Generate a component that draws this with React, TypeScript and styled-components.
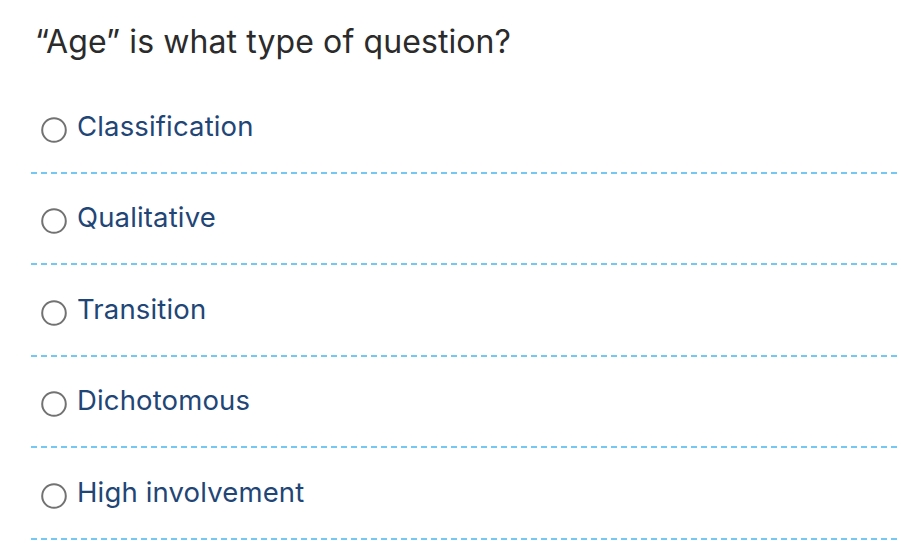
import React, { useState } from "react";
import styled, { createGlobalStyle } from "styled-components";

const GlobalStyle = createGlobalStyle`
  body {
    margin: 0;
    background: #ffffff;
    font-family: Inter, "Liberation Sans", sans-serif;
  }
`;

const Page = styled.div`
  width: 902px;
  height: 552px;
  padding: 23px 4px 0 31px;
  box-sizing: border-box;
  overflow: hidden;
`;

const Question = styled.h2`
  margin: 0 0 21px 4px;
  font-size: 32px;
  line-height: 38px;
  font-weight: 400;
  color: #2b2b2b;
  letter-spacing: 0.1px;
`;

const Options = styled.ul`
  list-style: none;
  margin: 0;
  padding: 0;
`;

const Option = styled.li`
  position: relative;
  height: 91.5px;
  display: flex;
  align-items: center;
  gap: 10px;
  padding: 0 0 4px 10px;
  box-sizing: border-box;
  cursor: pointer;

  &::after {
    content: "";
    position: absolute;
    left: 0;
    right: 0;
    bottom: 0;
    height: 2px;
    background: repeating-linear-gradient(
      to right,
      #74c8f4 0 6px,
      transparent 6px 10px
    );
  }
`;

const HiddenInput = styled.input.attrs({ type: "radio" })`
  position: absolute;
  opacity: 0;
  width: 0;
  height: 0;
  margin: 0;
`;

const RadioMark = styled.svg`
  flex: 0 0 26px;
  width: 26px;
  height: 26px;
  position: relative;
  top: 4px;
`;

const Label = styled.label`
  font-size: 27.5px;
  line-height: 34px;
  color: #1f4676;
  letter-spacing: 0.15px;
  cursor: pointer;
`;

const answers = [
  "Classification",
  "Qualitative",
  "Transition",
  "Dichotomous",
  "High involvement",
];

const App = () => {
  const [selected, setSelected] = useState<string | null>(null);

  return (
    <Page>
      <GlobalStyle />
      <Question>“Age” is what type of question?</Question>
      <Options>
        {answers.map((answer, i) => (
          <Option key={answer} onClick={() => setSelected(answer)}>
            <HiddenInput
              id={`answer-${i}`}
              name="question"
              checked={selected === answer}
              onChange={() => setSelected(answer)}
            />
            <RadioMark viewBox="0 0 26 26">
              <circle
                cx="13"
                cy="13"
                r="11.8"
                fill="#fff"
                stroke={selected === answer ? "#1f4676" : "#727272"}
                strokeWidth="2"
              />
              {selected === answer && (
                <circle cx="13" cy="13" r="6" fill="#1f4676" />
              )}
            </RadioMark>
            <Label htmlFor={`answer-${i}`}>{answer}</Label>
          </Option>
        ))}
      </Options>
    </Page>
  );
};

export default App;
